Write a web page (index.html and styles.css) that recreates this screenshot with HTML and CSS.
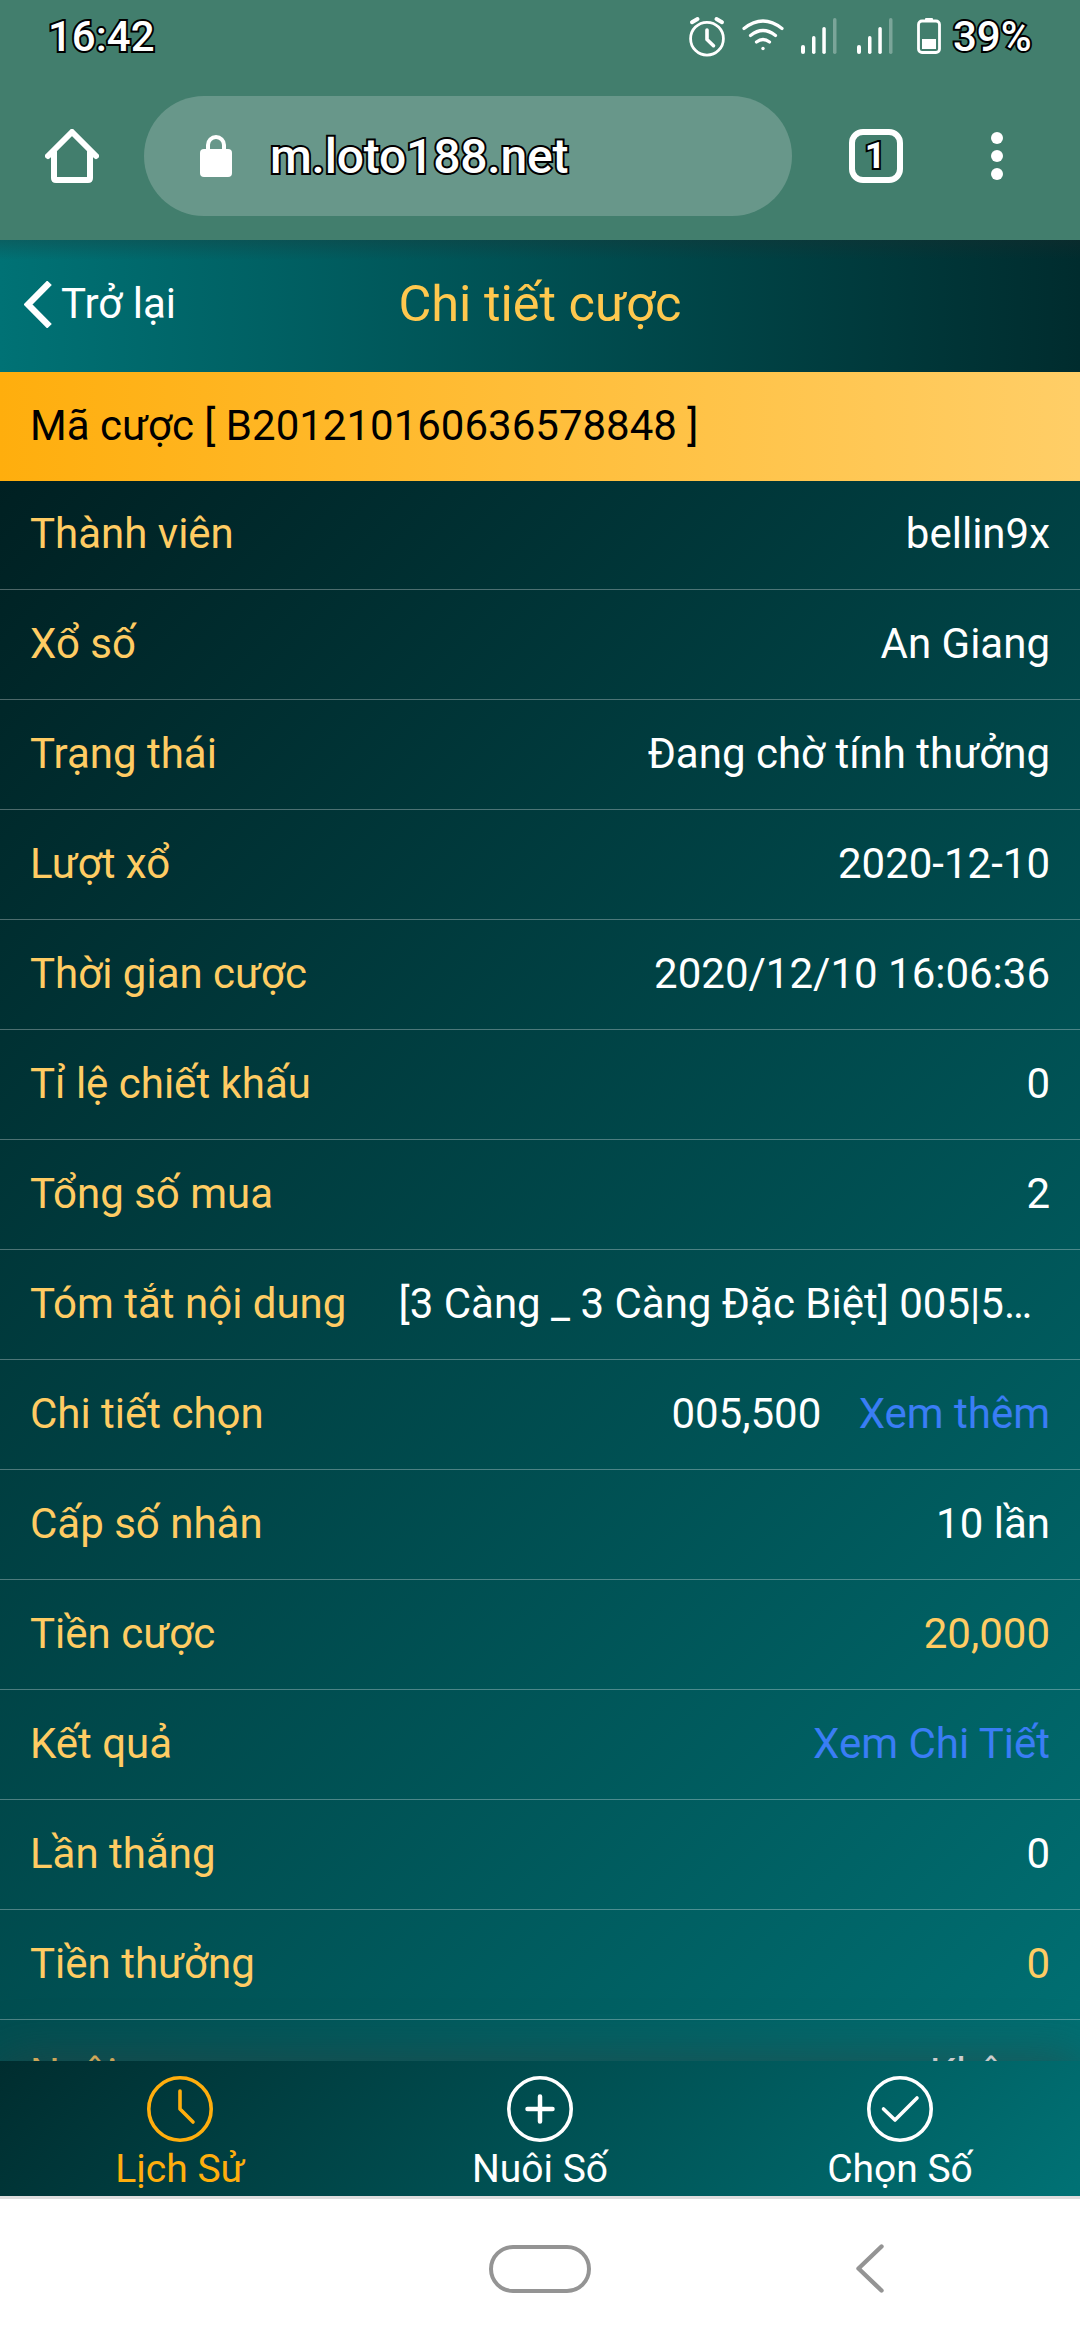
FILE: index.html
```
<!DOCTYPE html>
<html lang="vi">
<head>
<meta charset="utf-8">
<title>Chi tiết cược</title>
<link rel="stylesheet" href="styles.css">
</head>
<body>
<div class="screen">
  <div class="status">
    <span class="clock outlined">16:42</span>
    <div class="status-icons">
      <svg class="alarm" width="38" height="44" viewBox="0 0 38 44" fill="none" stroke="#fff" stroke-linecap="round"><circle cx="19" cy="23.7" r="16.4" stroke-width="2.8"/><path d="M19 15v9.500l6.500 6.200" stroke-width="3.600" stroke-linejoin="round"/><path d="M4 7.200l5.500-3.200M34 7.200L28.500 4" stroke-width="4"/></svg>
      <svg class="wifi" width="44" height="34" viewBox="0 0 44 34" fill="none" stroke="#fff" stroke-width="3.200" stroke-linecap="round"><path d="M3 10.500Q22-4.500 41 10.500M9.500 17.500Q22 7.500 34.500 17.500M15.500 24Q22 19 28.500 24"/><circle cx="22" cy="30.500" r="1.700" fill="#fff" stroke="none"/></svg>
      <svg class="signal" width="36" height="36" viewBox="0 0 36 36" fill="#fff"><rect x="0" y="27" width="4" height="9" rx="2"/><rect x="11" y="18" width="3.500" height="18" rx="1.700"/><rect x="21.300" y="9" width="3.500" height="27" rx="1.700"/><rect x="32" y="0" width="3.500" height="36" rx="1.700" opacity=".3"/></svg>
      <svg class="signal signal-two" width="36" height="36" viewBox="0 0 36 36" fill="#fff"><rect x="0" y="27" width="4" height="9" rx="2"/><rect x="11" y="18" width="3.500" height="18" rx="1.700"/><rect x="21.300" y="9" width="3.500" height="27" rx="1.700"/><rect x="32" y="0" width="3.500" height="36" rx="1.700" opacity=".3"/></svg>
      <svg class="battery" width="24" height="36" viewBox="0 0 24 36"><rect x="8" y="0" width="8" height="3" rx="1" fill="#fff"/><rect x="1.500" y="3" width="21" height="31.500" rx="3.500" fill="none" stroke="#fff" stroke-width="2.800"/><rect x="5" y="21" width="14" height="10" fill="#fff"/></svg>
    </div>
    <span class="percent outlined">39%</span>
  </div>
  <div class="toolbar">
    <svg class="home" width="54" height="54" viewBox="0 0 54 54" fill="none" stroke="#fff" stroke-width="6" stroke-linejoin="round" stroke-linecap="round"><path d="M3 27L27 3l24 24"/><path d="M9 23v26q0 2 2 2h32q2 0 2-2V23"/></svg>
    <div class="address">
      <svg class="lock" width="32" height="42" viewBox="0 0 32 42"><rect x="0" y="14" width="32" height="28" rx="4" fill="#fff"/><path d="M8 16V10a8 8 0 0 1 16 0v6" fill="none" stroke="#fff" stroke-width="4"/></svg>
      <span class="url outlined">m.loto188.net</span>
    </div>
    <div class="tabs"><span class="tab-count outlined">1</span></div>
    <div class="menu"><i></i><i></i><i></i></div>
  </div>
  <header class="header">
    <div class="back"><svg width="28" height="47" viewBox="0 0 28 47" fill="none" stroke="#fff" stroke-width="6.500"><path d="M25.500 1.800L4 23.500l21.500 21.700"/></svg><span>Trở lại</span></div>
    <h1 class="title">Chi tiết cược</h1>
  </header>
  <div class="bet-code">Mã cược [ B201210160636578848 ]</div>
  <main class="list">
    <div class="row first"><span class="label">Thành viên</span><span>bellin9x</span></div>
    <div class="row"><span class="label">Xổ số</span><span>An Giang</span></div>
    <div class="row"><span class="label">Trạng thái</span><span>Đang chờ tính thưởng</span></div>
    <div class="row"><span class="label">Lượt xổ</span><span>2020-12-10</span></div>
    <div class="row"><span class="label">Thời gian cược</span><span>2020/12/10 16:06:36</span></div>
    <div class="row"><span class="label">Tỉ lệ chiết khấu</span><span>0</span></div>
    <div class="row"><span class="label">Tổng số mua</span><span>2</span></div>
    <div class="row"><span class="label">Tóm tắt nội dung</span><span class="summary">[3 Càng _ 3 Càng Đặc Biệt] 005|5…</span></div>
    <div class="row"><span class="label">Chi tiết chọn</span><span class="pick">005,500 <a class="link">Xem thêm</a></span></div>
    <div class="row"><span class="label">Cấp số nhân</span><span>10 lần</span></div>
    <div class="row"><span class="label">Tiền cược</span><span class="amount">20,000</span></div>
    <div class="row"><span class="label">Kết quả</span><a class="link">Xem Chi Tiết</a></div>
    <div class="row"><span class="label">Lần thắng</span><span>0</span></div>
    <div class="row"><span class="label">Tiền thưởng</span><span class="amount">0</span></div>
    <div class="row"><span class="label">Nuôi</span><span>Không</span></div>
  </main>
  <nav class="tabbar">
    <div class="tab active"><svg width="66" height="66" viewBox="0 0 66 66"><circle cx="33" cy="33" r="31.200"/><path d="M33 15v18l13 13"/></svg><span>Lịch Sử</span></div>
    <div class="tab"><svg width="66" height="66" viewBox="0 0 66 66"><circle cx="33" cy="33" r="31.200"/><path class="plus" d="M33 20.500v25M20.500 33h25"/></svg><span>Nuôi Số</span></div>
    <div class="tab"><svg width="66" height="66" viewBox="0 0 66 66"><circle cx="33" cy="33" r="31.200"/><path d="M16.500 33L28 44l22-22"/></svg><span>Chọn Số</span></div>
  </nav>
  <div class="sysnav">
    <div class="pill"></div>
    <svg class="sys-back" width="28" height="49" viewBox="0 0 28 49" fill="none" stroke="#949494" stroke-width="4.400" stroke-linecap="round" stroke-linejoin="round"><path d="M25.500 2.500L2.500 24.500l23 22"/></svg>
  </div>
</div>
</body>
</html>
```
FILE: styles.css
```
* { box-sizing: border-box; }
body { margin: 0; font-family: Roboto, "Noto Sans", sans-serif; font-size: 42px; line-height: 50px; color: #fff; }
.screen { width: 1080px; height: 2340px; display: flex; flex-direction: column; overflow: hidden; }
svg { display: block; flex: none; }
.outlined { font-weight: 500; -webkit-text-stroke: 4px #000; paint-order: stroke fill; }
.status { height: 72px; flex: none; background: #427e6d; display: flex; padding-left: 48px; }
.clock, .percent { margin-top: 12px; }
.status-icons { display: flex; margin-left: auto; }
.alarm { margin: 15px 15px 0 0; }
.wifi { margin: 18px 16px 0 0; }
.signal { margin: 18px 20px 0 0; }
.signal-two { margin-right: 24px; }
.battery { margin: 18px 12px 0 0; }
.percent { width: 127px; }
.toolbar { height: 168px; flex: none; background: #427e6d; display: flex; align-items: center; padding: 0 77px 0 45px; }
.home { margin-right: 45px; }
.address { width: 648px; height: 120px; margin-right: 57px; background: #68978a; border-radius: 60px; display: flex; align-items: center; padding-left: 56px; }
.lock { margin-right: 38px; }
.url { font-size: 48px; letter-spacing: -0.2px; padding-top: 2px; }
.tabs { width: 54px; height: 54px; border: 6px solid #fff; border-radius: 14px; display: flex; align-items: center; justify-content: center; }
.tab-count { font-size: 36px; font-weight: 700; line-height: 40px; padding-right: 2px; }
.menu { margin-left: auto; display: flex; flex-direction: column; gap: 6px; }
.menu i { width: 12px; height: 12px; border-radius: 50%; background: #fff; }
.header { height: 132px; flex: none; display: grid; grid-template-columns: 1fr auto 1fr; align-items: center; padding-bottom: 4px; background: linear-gradient(180deg, rgba(40,40,40,.25), rgba(40,40,40,0) 20px), linear-gradient(90deg, #007275, #002c2e); }
.back { display: flex; align-items: center; gap: 9px; padding-left: 24px; }
.title { margin: 0; font-weight: 400; font-size: 50.5px; line-height: 60px; color: #ffc84e; }
.bet-code { height: 109px; flex: none; padding: 29px 30px; color: #000; background: linear-gradient(90deg, #ffae0d, #ffce67); }
.list { height: 1580px; flex: none; overflow: hidden; background: linear-gradient(135deg, #002022, #007073); }
.row { height: 110px; padding: 0 30px 2px; display: flex; align-items: center; justify-content: space-between; border-bottom: 1px solid rgba(255,255,255,.3); }
.first { height: 109px; }
.label { color: #ffcc63; }
.summary { margin-right: 18px; }
.link { color: #3a7df5; }
.pick .link { margin-left: 27px; }
.amount { color: #ffcc63; }
.tabbar { position: relative; z-index: 1; height: 135px; flex: none; display: grid; grid-template-columns: repeat(3, 1fr); background: linear-gradient(135deg, #002d2f, #007275); box-shadow: 0 -3px 50px rgba(60,60,60,.5); }
.tab { display: flex; flex-direction: column; align-items: center; padding-top: 15px; font-size: 39px; }
.tab svg { fill: none; stroke: currentColor; stroke-width: 3.6; stroke-linecap: round; stroke-linejoin: round; }
.plus { stroke-width: 4.5; }
.tab span { margin-top: 2px; }
.active { color: #ffae0d; }
.sysnav { position: relative; z-index: 2; height: 144px; flex: none; background: #fff; border-top: 3px solid #ddd; display: flex; align-items: center; padding-left: 489px; }
.pill { width: 102px; height: 48px; border: 4.5px solid #949494; border-radius: 24px; margin-right: 265px; }
.pill, .sys-back { margin-bottom: 2px; }
```
